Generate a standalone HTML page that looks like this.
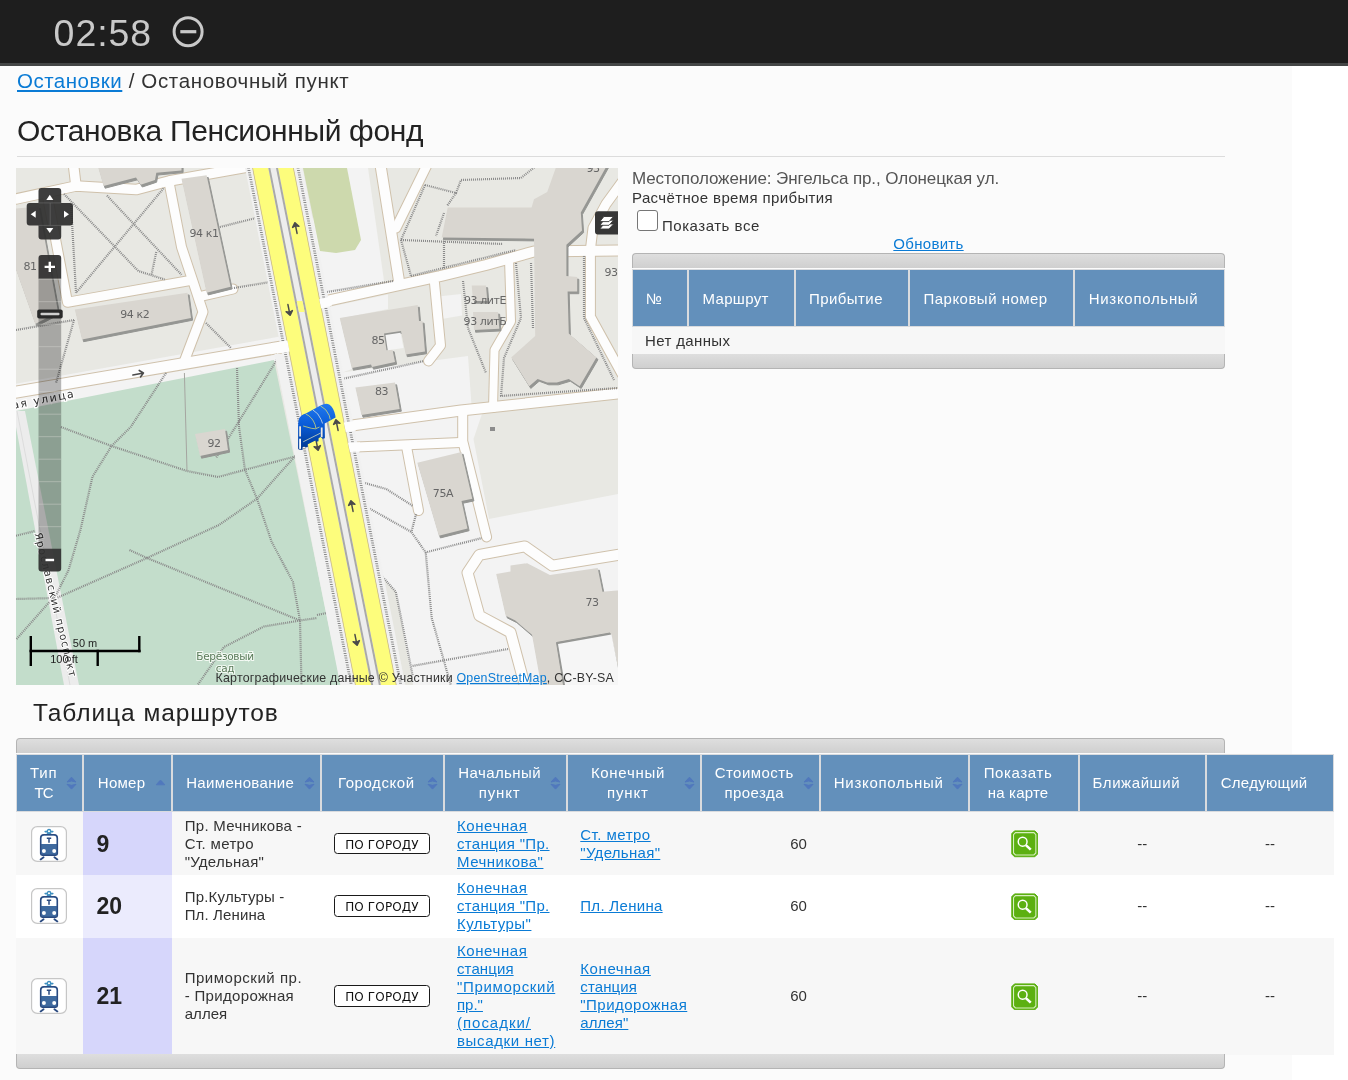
<!DOCTYPE html>
<html lang="ru">
<head>
<meta charset="utf-8">
<title>Остановка Пенсионный фонд</title>
<style>
html,body{margin:0;padding:0;}
body{width:1348px;height:1080px;overflow:hidden;background:#fff;font-family:"Liberation Sans",sans-serif;color:#333;position:relative;}
a{color:#0a7bd5;text-decoration:underline;}
span.m{white-space:nowrap;}
#crumb,#h1,#loc,#calc,#cbl,#upd,#h2,table,#clock,#map{will-change:transform;}
#topbar{position:absolute;left:0;top:0;width:1348px;height:62.6px;background:#1e1e1e;border-bottom:3.4px solid #444646;}
#clock{position:absolute;left:53px;padding-left:0.6px;top:11px;font-size:37.5px;line-height:44px;color:#c9c9c9;}
#dnd{position:absolute;left:171px;top:15px;width:34px;height:34px;}
#content{position:absolute;left:0;top:66px;width:1292px;height:1014px;background:#fbfbfb;}
#crumb{position:absolute;left:17px;top:68px;font-size:20.5px;line-height:26px;color:#333;white-space:nowrap;}
#h1{position:absolute;left:17px;top:113px;font-size:30px;line-height:36px;color:#222;white-space:nowrap;margin:0;font-weight:normal;}
#hr{position:absolute;left:17px;top:156px;width:1208px;height:1px;background:#dcdcdc;}
#map{position:absolute;left:16px;top:168px;width:602px;height:517px;overflow:hidden;background:#e9e8e3;}
#loc{position:absolute;left:632px;top:168px;font-size:17px;line-height:21px;color:#555;white-space:nowrap;}
#calc{position:absolute;left:632px;top:189px;font-size:15px;line-height:18px;color:#333;white-space:nowrap;}
#cb{position:absolute;left:637px;top:210px;width:19px;height:19px;border:1px solid #767676;border-radius:3px;background:#fff;}
#cbl{position:absolute;left:662px;top:217px;font-size:15px;line-height:18px;color:#333;white-space:nowrap;}
#upd{position:absolute;left:632px;width:593px;top:235px;text-align:center;font-size:15px;line-height:18px;}
.bar{position:absolute;height:14px;background:linear-gradient(#dedede,#cfcfcf);border:1px solid #b4b4b4;}
.bar.t{border-radius:4px 4px 0 0;border-bottom:none;}
.bar.b{border-radius:0 0 4px 4px;border-top:none;}
table{border-collapse:separate;border-spacing:0;table-layout:fixed;position:absolute;}
th{background:#6390bb;color:#fff;font-weight:normal;font-size:15px;line-height:19px;border:1px solid #d9dbde;padding:0 12px 2px 12px;box-sizing:border-box;position:relative;white-space:nowrap;}
td{font-size:15px;line-height:18px;color:#333;padding:0 13px;box-sizing:border-box;white-space:nowrap;}
#t1{left:632px;top:269px;width:593px;}
#t1 th{height:58px;text-align:center;padding-right:24px;padding-bottom:0;}
#t1 td{height:27px;background:#f7f7f7;}
#h2{position:absolute;left:33px;top:698px;font-size:24.5px;line-height:30px;color:#222;white-space:nowrap;margin:0;font-weight:normal;}
#t2{left:16px;top:754px;width:1318px;}
#t2 th{height:58px;text-align:center;padding-right:24px;}
#t2 td:first-child{padding-right:0;}
#t2 th.d{line-height:19.5px;padding-bottom:1px;}
#t2 tr.o td{background:#f7f7f7;}
#t2 tr.e td{background:#fff;}
#t2 tr.o td.n{background:#d6d6fb;}
#t2 tr.e td.n{background:#ebebfd;}
#t2 td.n{font-size:23px;font-weight:bold;color:#222;}
#t2 td.c{text-align:center;}
#t2 td.r{text-align:right;}
.sort{position:absolute;right:5px;top:50%;margin-top:-8px;width:11px;height:16px;}
.tram{display:block;width:36px;height:36px;margin:0 0 0 2.2px;}
.badge{display:block;width:94.6px;height:19.6px;border:1.2px solid #1a1a1a;border-radius:3.5px;background:#fff;font-family:"DejaVu Sans","Liberation Sans",sans-serif;font-size:12px;line-height:23.5px;text-align:center;color:#111;}
.zoom{display:block;width:27.4px;height:27.6px;margin:0 auto;position:relative;left:0.7px;top:0.4px;}
</style>
</head>
<body>
<div id="topbar">
  <div id="clock"><span class="m" style="letter-spacing:0.94px">02:58</span></div>
  <svg id="dnd" viewBox="0 0 34 34"><circle cx="17.1" cy="16.7" r="14" fill="none" stroke="#c9c9c9" stroke-width="3"/><rect x="9.3" y="15.1" width="16" height="3.2" fill="#c9c9c9"/></svg>
</div>
<div id="content"></div>
<div id="crumb"><a href="#"><span class="m" style="letter-spacing:0.50px">Остановки</span></a><span class="m" style="letter-spacing:0.65px"> / Остановочный пункт</span></div>
<h1 id="h1"><span class="m" style="letter-spacing:-0.35px">Остановка Пенсионный фонд</span></h1>
<div id="hr"></div>
<div id="map"><svg width="602" height="517" viewBox="0 0 602 517" style="position:absolute;left:0;top:0;font-family:'DejaVu Sans','Liberation Sans',sans-serif">
<rect width="602" height="517" fill="#e8e8e3"/>
<!-- light areas -->
<g fill="#f3f3f3">
<polygon points="330,0 352,0 368,113 330,124 300,131 290,60"/>
<polygon points="308,140 372,126.5 372,141 324,150.5 336,201 322,206"/>
<polygon points="-2,216 264,168.5 264,193 -2,245"/>
<polygon points="322,205 452,188 456,244 330,262"/>
<polygon points="325,258 602,222 602,517 380,517"/>
<polygon points="424.5,128.3 445,126 446,147.5 425.7,151"/>
</g>
<polygon points="457.5,271 473,351 602,326 602,222 468,240" fill="#e8e8e3"/>
<polygon points="364,407 380,424 397,517 381,517" fill="#e6e6e0"/>
<!-- park -->
<polygon points="0,243 258,192 325,517 0,517" fill="#c3ddcb"/>
<polygon points="287,0 331,0 345,72 339,82 320,85 304,83" fill="#cdd9ad"/>
<!-- Yaroslavsky street -->
<polygon points="-3,243 9,243 63,517 48,517" fill="#ececec"/>
<line x1="1" y1="243" x2="54" y2="517" stroke="#dcdcdc" stroke-width="1"/>
<!-- streets casing -->
<g fill="none" stroke="#cfc1ab" stroke-linecap="round" stroke-linejoin="round">
<path d="M0,31 L60,18 L120,21.6 L153,13 L237,-2" stroke-width="11.5"/>
<path d="M57.5,-3 L60,18" stroke-width="11.5"/>
<path d="M153.5,16.8 L165.5,79 L177.5,115 L187,144 L168,194" stroke-width="11.0"/>
<path d="M31,26 L51.5,134.3 L174,112.5" stroke-width="11.0"/>
<path d="M184.7,128.3 L217,121" stroke-width="11.0"/>
<path d="M-5,225 L275,177.3" stroke-width="13.0"/>
<path d="M364.5,-3 L383,113" stroke-width="12.0"/>
<path d="M380,60 L411,-3" stroke-width="11.0"/>
<path d="M290,137.7 L303,134.7 L424,108.2 L470,97 L518,83.5 L606,82.4" stroke-width="12.0"/>
<path d="M418.5,115 L424.5,177.5 L412.5,193" stroke-width="11.0"/>
<path d="M493,91 L495,153.5 L478.5,182 L477,240" stroke-width="10.0"/>
<path d="M574.4,81.5 L574.4,148.7 L606,206" stroke-width="11.0"/>
<path d="M574.4,81.5 L577,60 L590,36 L606,14" stroke-width="11.0"/>
<path d="M325,259 L445,242.5 L606,225" stroke-width="12.0"/>
<path d="M334.4,279.3 L444.3,274.5" stroke-width="11.0"/>
<path d="M446.7,243 L446.7,273 L470.6,369" stroke-width="11.0"/>
<path d="M390.6,279 L402.5,342.6" stroke-width="11.0"/>
<path d="M606,386.2 L536.3,397.6 L508.8,378.4 L463.4,386.8 L451.5,404.7 L463.4,447.7 L494.5,464.4 L509.5,520" stroke-width="12.0"/>
</g>
<g fill="none" stroke="#fdfdfd" stroke-linecap="round" stroke-linejoin="round">
<path d="M0,31 L60,18 L120,21.6 L153,13 L237,-2" stroke-width="9.5"/>
<path d="M57.5,-3 L60,18" stroke-width="9.5"/>
<path d="M153.5,16.8 L165.5,79 L177.5,115 L187,144 L168,194" stroke-width="9"/>
<path d="M31,26 L51.5,134.3 L174,112.5" stroke-width="9"/>
<path d="M184.7,128.3 L217,121" stroke-width="9"/>
<path d="M-5,225 L275,177.3" stroke-width="11"/>
<path d="M364.5,-3 L383,113" stroke-width="10"/>
<path d="M380,60 L411,-3" stroke-width="9"/>
<path d="M290,137.7 L303,134.7 L424,108.2 L470,97 L518,83.5 L606,82.4" stroke-width="10"/>
<path d="M418.5,115 L424.5,177.5 L412.5,193" stroke-width="9"/>
<path d="M493,91 L495,153.5 L478.5,182 L477,240" stroke-width="8"/>
<path d="M574.4,81.5 L574.4,148.7 L606,206" stroke-width="9"/>
<path d="M574.4,81.5 L577,60 L590,36 L606,14" stroke-width="9"/>
<path d="M325,259 L445,242.5 L606,225" stroke-width="10"/>
<path d="M334.4,279.3 L444.3,274.5" stroke-width="9"/>
<path d="M446.7,243 L446.7,273 L470.6,369" stroke-width="9"/>
<path d="M390.6,279 L402.5,342.6" stroke-width="9"/>
<path d="M606,386.2 L536.3,397.6 L508.8,378.4 L463.4,386.8 L451.5,404.7 L463.4,447.7 L494.5,464.4 L509.5,520" stroke-width="10"/>
</g>
<g fill="none" stroke="#8a8a8a" stroke-width="2.2" stroke-dasharray="1 1" stroke-linejoin="round">
<polyline points="45,259 95.5,278 171,303 202,309 282,287.7"/>
<polyline points="150,205 114.7,259 95.5,278 76.4,309 64.5,361.7 52.6,402 40.6,426 0,471.6"/>
<polyline points="221,200 223,259 229,302 241,330.7 255.6,373.7 277,414 284,452.5 285.5,517"/>
<polyline points="279.5,287.7 241,330.7 203,357 131,390 40.6,430 0,431"/>
<polyline points="113.5,382 131,390 284,452.5 301,450"/>
<polyline points="284,452.5 248,458.5 208,479 181.6,517"/>
<polyline points="0,367.7 19,363"/>
<polyline points="262,190 225,250 200,290"/>
<polyline points="48,26 122.3,103 148.7,111.5"/>
<polyline points="147.5,20.4 60,124.7"/>
<polyline points="91,27.6 165.5,106.7"/>
<polyline points="140.3,84 135.5,106.7"/>
<polyline points="55,36 60,124.7"/>
<polyline points="0,162 58,152"/>
<polyline points="58,152 40,215"/>
<polyline points="200,60 240,50"/>
<polyline points="218,120 254,114"/>
<polyline points="190,155 215,180"/>
<polyline points="409,17 440,25 431,38"/>
<polyline points="440,25 445,12 505,10 520,-2"/>
<polyline points="409,17 385,72 395,108"/>
<polyline points="385,72 487,76"/>
<polyline points="428,45 420,68"/>
<polyline points="428,73 428,100"/>
<polyline points="395,108 500,82"/>
<polyline points="447,113 452,160 470,205"/>
<polyline points="500,95 505,150 488,190 485,228 602,220"/>
<polyline points="515,95 517,160"/>
<polyline points="568,88 568,150 598,212"/>
<polyline points="326,211 408,193"/>
<polyline points="305,125 377,113"/>
<polyline points="336.8,285.3 345.2,314 370.3,321 396.6,337.8"/>
<polyline points="345.2,314 348.8,337.8 395.4,364 409.7,384.4 465.8,370"/>
<polyline points="400,346.2 395.4,364"/>
<polyline points="409.7,384.4 415.7,450 434.8,517"/>
<polyline points="348.8,337.8 363,404.7 379.8,423.8 396.6,507.4"/>
<polyline points="396.6,497.9 492,481"/>
<polyline points="301,447 320,443"/>
</g>
<line x1="168.4" y1="205" x2="171" y2="303" stroke="#a5a5a0" stroke-width="1"/>

<polygon points="-0.4,43.0 24.4,40.6 43.6,146.2 20.8,158.2 -0.4,98.2" fill="#959693" stroke="#959693" stroke-width="1" stroke-linejoin="round"/><polygon points="-2.0,40.8 22.8,38.4 42.0,144.0 19.2,156.0 -2.0,96.0" fill="#d9d6d0"/>
<polygon points="83.1,-0.8 167.1,-0.8 167.1,4.6 141.9,7.0 140.6,14.2 126.3,19.0 121.6,11.8 89.1,20.2" fill="#959693" stroke="#959693" stroke-width="1" stroke-linejoin="round"/><polygon points="81.5,-3.0 165.5,-3.0 165.5,2.4 140.3,4.8 139.0,12.0 124.7,16.8 120.0,9.6 87.5,18.0" fill="#d9d6d0"/>
<polygon points="167.1,13.0 192.2,9.4 216.2,120.9 192.2,126.9" fill="#959693" stroke="#959693" stroke-width="1" stroke-linejoin="round"/><polygon points="165.5,10.8 190.6,7.2 214.6,118.7 190.6,124.7" fill="#d9d6d0"/>
<polygon points="60.4,143.7 173.1,126.9 176.6,152.2 67.6,173.7" fill="#959693" stroke="#959693" stroke-width="1" stroke-linejoin="round"/><polygon points="58.8,141.5 171.5,124.7 175.0,150.0 66.0,171.5" fill="#d9d6d0"/>
<polygon points="180.6,268.2 210.6,263.2 213.6,284.2 185.6,290.2" fill="#959693" stroke="#959693" stroke-width="1" stroke-linejoin="round"/><polygon points="179.0,266.0 209.0,261.0 212.0,282.0 184.0,288.0" fill="#d9d6d0"/>
<polygon points="325.4,152.2 403.3,139.2 404.6,155.2 408.1,155.2 410.6,185.7 391.3,188.7 386.6,165.2 369.6,167.7 372.1,184.5 378.1,183.7 380.6,196.2 357.6,201.2 356.6,198.8 337.4,202.2" fill="#959693" stroke="#959693" stroke-width="1" stroke-linejoin="round"/><polygon points="323.8,150.0 401.7,137.0 403.0,153.0 406.5,153.0 409.0,183.5 389.7,186.5 385.0,163.0 368.0,165.5 370.5,182.3 376.5,181.5 379.0,194.0 356.0,199.0 355.0,196.6 335.8,200.0" fill="#d9d6d0"/>
<polygon points="341.0,221.6 380.6,216.8 385.3,243.2 347.0,249.2" fill="#959693" stroke="#959693" stroke-width="1" stroke-linejoin="round"/><polygon points="339.4,219.4 379.0,214.6 383.7,241.0 345.4,247.0" fill="#d9d6d0"/>
<polygon points="457.3,119.7 471.6,119.7 472.9,135.2 458.6,135.2" fill="#959693" stroke="#959693" stroke-width="1" stroke-linejoin="round"/><polygon points="455.7,117.5 470.0,117.5 471.3,133.0 457.0,133.0" fill="#d9d6d0"/>
<polygon points="458.6,146.2 483.6,146.2 484.9,162.9 459.6,164.2" fill="#959693" stroke="#959693" stroke-width="1" stroke-linejoin="round"/><polygon points="457.0,144.0 482.0,144.0 483.3,160.7 458.0,162.0" fill="#d9d6d0"/>
<polygon points="592.8,-0.8 566.4,46.6 567.6,64.6 552.0,78.9 552.0,110.1 562.8,111.3 562.8,125.7 553.2,125.7 554.4,167.7 582.0,191.6 565.2,220.4 554.4,213.2 542.4,216.8 532.8,216.8 523.2,213.2 514.8,220.4 496.8,191.6 520.8,170.1 519.6,72.9 427.3,71.7 433.3,41.8 517.2,41.8 519.6,33.4 532.8,26.2 542.4,-0.8" fill="#959693" stroke="#959693" stroke-width="1" stroke-linejoin="round"/><polygon points="591.2,-3.0 564.8,44.4 566.0,62.4 550.4,76.7 550.4,107.9 561.2,109.1 561.2,123.5 551.6,123.5 552.8,165.5 580.4,189.4 563.6,218.2 552.8,211.0 540.8,214.6 531.2,214.6 521.6,211.0 513.2,218.2 495.2,189.4 519.2,167.9 518.0,70.7 425.7,69.5 431.7,39.6 515.6,39.6 518.0,31.2 531.2,24.0 540.8,-3.0" fill="#d9d6d0"/>
<polygon points="402.9,297.0 447.1,286.2 457.9,332.9 447.1,335.2 453.1,362.7 424.4,369.9" fill="#959693" stroke="#959693" stroke-width="1" stroke-linejoin="round"/><polygon points="401.3,294.8 445.5,284.0 456.3,330.7 445.5,333.0 451.5,360.5 422.8,367.7" fill="#d9d6d0"/>
<polygon points="481.8,408.1 496.1,405.7 496.1,399.8 512.8,397.4 535.5,409.3 583.3,402.2 588.1,426.0 602.4,424.8 607.6,424.2 607.6,522.2 527.2,522.2 517.6,469.0 500.9,454.7 491.3,449.9" fill="#959693" stroke="#959693" stroke-width="1" stroke-linejoin="round"/><polygon points="480.2,405.9 494.5,403.5 494.5,397.6 511.2,395.2 533.9,407.1 581.7,400.0 586.5,423.8 600.8,422.6 606.0,422.0 606.0,520.0 525.6,520.0 516.0,466.8 499.3,452.5 489.7,447.7" fill="#d9d6d0"/>
<polygon points="540.5,474.5 594,465 606,520 548,520" fill="#959693" stroke="#959693" stroke-width="1" stroke-linejoin="round"/><polygon points="542,476 595.5,466.5 606,520 549.5,520" fill="#f6f6f6"/>
<rect x="474" y="259" width="5" height="4" fill="#8c8c8c"/>

<polygon points="369.5,167 384.5,164.8 387.5,180 371.8,182.3" fill="#f4f4f4"/>
<!-- avenue -->
<g transform="skewX(11.25)">
<rect x="229" y="-5" width="7.5" height="200" fill="#f1f1f1"/>
<rect x="221.5" y="186" width="15" height="340" fill="#f1f1f1"/>
<rect x="277" y="-5" width="9.5" height="530" fill="#f1f1f1"/>
<rect x="236.5" y="-5" width="41" height="530" fill="#fdfd7c"/>
<rect x="252.3" y="-5" width="9.7" height="530" fill="#ededed"/>
<rect x="252.3" y="-5" width="2" height="530" fill="#a9a9a9"/>
<rect x="260" y="-5" width="2" height="530" fill="#a9a9a9"/>
<rect x="254.3" y="133" width="5.7" height="11" fill="#fdfd7c"/>
<rect x="236.2" y="-5" width="0.8" height="530" fill="#c8b98c"/>
<rect x="277" y="-5" width="0.8" height="530" fill="#c8b98c"/>
<g stroke="#8a8a8a" stroke-width="2.8" stroke-dasharray="1 1.3" fill="none">
<line x1="232.5" y1="-5" x2="232.5" y2="525"/>
<line x1="282" y1="-5" x2="282" y2="525"/>
</g>
</g>
<g fill="#fdfdfd">
<polygon points="303.2,131.2 316,128.3 316,137.5 305.2,140.6"/>
<polygon points="327.8,254.4 340,252.7 340,262.4 329.8,264.1"/>
<polygon points="332.0,274.8 344,274.3 344,283.4 334,283.9"/>
<polygon points="261,174.4 271.4,172.6 273.6,183.4 261,185.8"/>
</g>
<path transform="translate(280,60) rotate(-11.25)" d="M0,5.5 L0,-3 M-3.2,-1.2 L0,-5.4 L3.2,-1.2 L0,-2.4 Z" fill="#4a4a4a" stroke="#4a4a4a" stroke-width="1.5" stroke-linecap="round" stroke-linejoin="round"/>
<path transform="translate(273,142) rotate(168.75)" d="M0,5.5 L0,-3 M-3.2,-1.2 L0,-5.4 L3.2,-1.2 L0,-2.4 Z" fill="#4a4a4a" stroke="#4a4a4a" stroke-width="1.5" stroke-linecap="round" stroke-linejoin="round"/>
<path transform="translate(321,257) rotate(-11.25)" d="M0,5.5 L0,-3 M-3.2,-1.2 L0,-5.4 L3.2,-1.2 L0,-2.4 Z" fill="#4a4a4a" stroke="#4a4a4a" stroke-width="1.5" stroke-linecap="round" stroke-linejoin="round"/>
<path transform="translate(301,277) rotate(168.75)" d="M0,5.5 L0,-3 M-3.2,-1.2 L0,-5.4 L3.2,-1.2 L0,-2.4 Z" fill="#4a4a4a" stroke="#4a4a4a" stroke-width="1.5" stroke-linecap="round" stroke-linejoin="round"/>
<path transform="translate(336,338) rotate(-11.25)" d="M0,5.5 L0,-3 M-3.2,-1.2 L0,-5.4 L3.2,-1.2 L0,-2.4 Z" fill="#4a4a4a" stroke="#4a4a4a" stroke-width="1.5" stroke-linecap="round" stroke-linejoin="round"/>
<path transform="translate(340,472) rotate(168.75)" d="M0,5.5 L0,-3 M-3.2,-1.2 L0,-5.4 L3.2,-1.2 L0,-2.4 Z" fill="#4a4a4a" stroke="#4a4a4a" stroke-width="1.5" stroke-linecap="round" stroke-linejoin="round"/>
<path transform="translate(122.3,206) rotate(79)" d="M0,5.5 L0,-4 M-3.3,-1.6 L0,-5.2 L3.3,-1.6" fill="none" stroke="#4a4a4a" stroke-width="1.6" stroke-linecap="round" stroke-linejoin="round"/>

<g font-size="11" fill="#666" text-anchor="middle" letter-spacing="-0.4">
<text x="188" y="69">94 к1</text>
<text x="118.7" y="149.5">94 к2</text>
<text x="14" y="102">81</text>
<text x="198" y="279">92</text>
<text x="362" y="175.5">85</text>
<text x="365.5" y="227">83</text>
<text x="469" y="136">93 литЕ</text>
<text x="469" y="157">93 литБ</text>
<text x="595" y="107.5">93</text>
<text x="577" y="4.4">93</text>
<text x="427" y="329">75А</text>
<text x="576" y="437.5">73</text>
</g>
<g font-size="11" fill="#333" stroke="#fff" stroke-width="2.5" paint-order="stroke" letter-spacing="1.5">
<text transform="translate(-3,241) rotate(-10.8)">ая улица</text>
<text transform="translate(18.5,365.5) rotate(76.3)" letter-spacing="1.15" font-size="10.5" stroke-width="2">Ярославский проспект</text>
</g>
<g font-size="10.5" fill="#587a58" stroke="#f4faf4" stroke-width="2" paint-order="stroke" text-anchor="middle" letter-spacing="-0.3"><text x="209" y="492">Берёзовый</text><text x="209" y="504">сад</text></g>

<defs><linearGradient id="bg" x1="0" y1="0" x2="0" y2="1"><stop offset="0" stop-color="#2079ee"/><stop offset="0.45" stop-color="#0a5cd8"/><stop offset="1" stop-color="#00388f"/></linearGradient></defs>
<g transform="translate(274,230)">
<path d="M8.1,27.5 L8.4,22.9 Q9,19.5 11.5,17.6 Q13.5,16.2 15.8,15.6 L30.5,7.6 Q33,6 35.1,5.9 Q37.5,5.6 39.6,6.8 Q41.6,8.2 43,10.8 Q44.6,14 45.2,17 L45.6,19.6 L34.7,25.5 L34.9,40.2 L32.6,40.7 L30.6,38.9 L28.6,40.2 L28.5,43.3 L26.5,43.8 L25.5,42.6 L17.8,46.3 L17.8,48.9 L15.3,49.6 L14.3,48.4 L12.7,48.9 L12.5,51.9 L8.7,51.4 L8.1,50.4 Z" fill="url(#bg)"/>
<rect x="9.2" y="28.3" width="1.8" height="10.2" fill="#ece7e0"/>
<rect x="9.2" y="40.7" width="1.8" height="10.2" fill="#fff"/>
<rect x="30.8" y="29.5" width="1.8" height="9.7" fill="#ece7e0"/>
<g fill="none" stroke-width="0.7">
<path d="M15.8,16 Q22.4,19 25,26.5 L26,30.5" stroke="#ece96a"/>
<path d="M22.9,12 Q28.5,15 31,21.4 L32.6,25.5" stroke="#f0f0e0"/>
<path d="M30.5,7.9 Q36.7,11 39.2,17.3 L40.2,21.4" stroke="#ece96a"/>
<path d="M13.2,28 L21.4,30.3 L25.5,30.8 L29.5,29" stroke="#ece96a"/>
<path d="M13.2,43.8 L30.5,35.1" stroke="#f0f0c0"/>
</g>
</g>

<g>
<path d="M25.5,20.1 h16.7 a3,3 0 0 1 3,3 v11.8 h8.8 a3,3 0 0 1 3,3 v16.5 a3,3 0 0 1 -3,3 h-8.8 v11.1 a3,3 0 0 1 -3,3 h-16.7 a3,3 0 0 1 -3,-3 v-11.1 h-8.8 a3,3 0 0 1 -3,-3 v-16.5 a3,3 0 0 1 3,-3 h8.8 v-11.8 a3,3 0 0 1 3,-3 z" fill="#2e2e2e" fill-opacity="0.93"/>
<path d="M22.5,34.9 h22.7 M22.5,57.4 h22.7 M34.2,34.9 v22.5" stroke="#777" stroke-width="0.5" fill="none"/>
<g fill="#fff"><polygon points="33.8,26.8 37.3,32 30.3,32"/><polygon points="33.8,65 37.3,60 30.3,60"/><polygon points="14.7,46.2 19.7,42.7 19.7,49.7"/><polygon points="53,46.2 48,42.7 48,49.7"/></g>
<path d="M22.5,110.7 v-20.7 a3,3 0 0 1 3,-3 h16.7 a3,3 0 0 1 3,3 v20.7 z" fill="#2e2e2e" fill-opacity="0.93"/>
<path d="M28.6,98.9 h10.4 M33.8,93.7 v10.4" stroke="#fff" stroke-width="2.4" fill="none"/>
<rect x="22.5" y="110.7" width="22.7" height="270.3" fill="#000" fill-opacity="0.28"/>
<g stroke="#d8d8d4" stroke-opacity="0.55" stroke-width="0.8">
<line x1="22.5" x2="45.2" y1="111.2" y2="111.2"/><line x1="22.5" x2="45.2" y1="133.7" y2="133.7"/><line x1="22.5" x2="45.2" y1="156.2" y2="156.2"/><line x1="22.5" x2="45.2" y1="178.7" y2="178.7"/><line x1="22.5" x2="45.2" y1="201.2" y2="201.2"/><line x1="22.5" x2="45.2" y1="223.7" y2="223.7"/><line x1="22.5" x2="45.2" y1="246.2" y2="246.2"/><line x1="22.5" x2="45.2" y1="268.7" y2="268.7"/><line x1="22.5" x2="45.2" y1="291.2" y2="291.2"/><line x1="22.5" x2="45.2" y1="313.7" y2="313.7"/><line x1="22.5" x2="45.2" y1="336.2" y2="336.2"/><line x1="22.5" x2="45.2" y1="358.7" y2="358.7"/></g>
<rect x="21.2" y="141.6" width="25.5" height="8.8" rx="2" fill="#2a2a2a"/>
<rect x="24.5" y="144.8" width="19" height="2.4" rx="1" fill="#cfcfcf"/>
<path d="M22.5,380.8 h22.7 v19.7 a3,3 0 0 1 -3,3 h-16.7 a3,3 0 0 1 -3,-3 z" fill="#2e2e2e" fill-opacity="0.93"/>
<path d="M29.5,392 h8.6" stroke="#fff" stroke-width="2.4" fill="none"/>
<path d="M602,43.2 h-20 a3,3 0 0 0 -3,3 v17.4 a3,3 0 0 0 3,3 h20 z" fill="#363636"/>
<g fill="#fff" stroke="#363636" stroke-width="0.9"><polygon points="583.8,61 587.9,55.9 597.6,55.9 593,61"/><polygon points="583.8,57.3 587.9,52.2 597.6,52.2 593,57.3"/><polygon points="583.8,53.6 587.9,48.5 597.6,48.5 593,53.6"/></g>
</g>
<g stroke="#000" stroke-width="2.6" fill="none"><path d="M13.5,483 H124.6"/><path d="M14.8,468 V498 M123.3,468 V484.3 M81.7,481.7 V498" stroke-width="2.4"/></g>
<g font-size="11" fill="#222" text-anchor="middle" font-family="'Liberation Sans',sans-serif"><text x="69" y="479">50 m</text><text x="48" y="495">100 ft</text></g>
<text x="598" y="514" font-size="12.4" letter-spacing="0.22" text-anchor="end" fill="#333" font-family="'Liberation Sans',sans-serif" style="white-space:pre">Картографические данные © Участники <tspan fill="#0a7bd5" text-decoration="underline">OpenStreetMap</tspan>, CC-BY-SA</text>

</svg>
</div>
<div id="loc"><span class="m" style="letter-spacing:-0.10px">Местоположение: Энгельса пр., Олонецкая ул.</span></div>
<div id="calc"><span class="m" style="letter-spacing:0.37px">Расчётное время прибытия</span></div>
<div id="cb"></div>
<div id="cbl"><span class="m" style="letter-spacing:0.52px">Показать все</span></div>
<div id="upd"><a href="#"><span class="m" style="letter-spacing:0.30px">Обновить</span></a></div>
<div class="bar t" style="left:632px;top:253px;width:591px;"></div>
<table id="t1">
 <colgroup><col style="width:56.3px"><col style="width:106.7px"><col style="width:114px"><col style="width:165.2px"><col style="width:150.8px"></colgroup>
 <tr><th>№</th><th><span class="m" style="letter-spacing:0.31px">Маршрут</span></th><th><span class="m" style="letter-spacing:0.42px">Прибытие</span></th><th><span class="m" style="letter-spacing:0.48px">Парковый номер</span></th><th><span class="m" style="letter-spacing:0.70px">Низкопольный</span></th></tr>
 <tr><td colspan="5"><span class="m" style="letter-spacing:0.37px">Нет данных</span></td></tr>
</table>
<div class="bar b" style="left:632px;top:354px;width:591px;"></div>
<h2 id="h2"><span class="m" style="letter-spacing:0.94px">Таблица маршрутов</span></h2>
<div class="bar t" style="left:16px;top:738px;width:1207px;"></div>
<table id="t2">
 <colgroup><col style="width:67.4px"><col style="width:88.3px"><col style="width:149px"><col style="width:123.3px"><col style="width:123.3px"><col style="width:133.3px"><col style="width:119.4px"><col style="width:149.5px"><col style="width:109.1px"><col style="width:127.6px"><col style="width:127.8px"></colgroup>
 <tr>
  <th class="d"><span class="m" style="letter-spacing:0.84px">Тип</span><br><span class="m" style="letter-spacing:-0.80px">ТС</span><svg class="sort" viewBox="0 0 11 16"><path d="M1,7 L5.5,2.2 L10,7 L5.5,6 Z M1,9.3 L5.5,10.3 L10,9.3 L5.5,14.1 Z" fill="#5078bd" stroke="#5078bd" stroke-width="1" stroke-linejoin="round"/></svg></th><th><span class="m" style="letter-spacing:0.26px">Номер</span><svg class="sort" viewBox="0 0 11 16"><path d="M1.2,9.8 L4.6,5.8 Q5.5,5.2 6.4,5.8 L9.8,9.8 Z" fill="#5078bd" stroke="#5078bd" stroke-width="0.8" stroke-linejoin="round"/></svg></th><th><span class="m" style="letter-spacing:0.34px">Наименование</span><svg class="sort" viewBox="0 0 11 16"><path d="M1,7 L5.5,2.2 L10,7 L5.5,6 Z M1,9.3 L5.5,10.3 L10,9.3 L5.5,14.1 Z" fill="#5078bd" stroke="#5078bd" stroke-width="1" stroke-linejoin="round"/></svg></th><th><span class="m" style="letter-spacing:0.58px">Городской</span><svg class="sort" viewBox="0 0 11 16"><path d="M1,7 L5.5,2.2 L10,7 L5.5,6 Z M1,9.3 L5.5,10.3 L10,9.3 L5.5,14.1 Z" fill="#5078bd" stroke="#5078bd" stroke-width="1" stroke-linejoin="round"/></svg></th><th class="d"><span class="m" style="letter-spacing:0.42px">Начальный</span><br><span class="m" style="letter-spacing:0.87px">пункт</span><svg class="sort" viewBox="0 0 11 16"><path d="M1,7 L5.5,2.2 L10,7 L5.5,6 Z M1,9.3 L5.5,10.3 L10,9.3 L5.5,14.1 Z" fill="#5078bd" stroke="#5078bd" stroke-width="1" stroke-linejoin="round"/></svg></th><th class="d"><span class="m" style="letter-spacing:0.70px">Конечный</span><br><span class="m" style="letter-spacing:0.87px">пункт</span><svg class="sort" viewBox="0 0 11 16"><path d="M1,7 L5.5,2.2 L10,7 L5.5,6 Z M1,9.3 L5.5,10.3 L10,9.3 L5.5,14.1 Z" fill="#5078bd" stroke="#5078bd" stroke-width="1" stroke-linejoin="round"/></svg></th><th class="d"><span class="m" style="letter-spacing:0.46px">Стоимость</span><br><span class="m" style="letter-spacing:0.46px">проезда</span><svg class="sort" viewBox="0 0 11 16"><path d="M1,7 L5.5,2.2 L10,7 L5.5,6 Z M1,9.3 L5.5,10.3 L10,9.3 L5.5,14.1 Z" fill="#5078bd" stroke="#5078bd" stroke-width="1" stroke-linejoin="round"/></svg></th><th><span class="m" style="letter-spacing:0.71px">Низкопольный</span><svg class="sort" viewBox="0 0 11 16"><path d="M1,7 L5.5,2.2 L10,7 L5.5,6 Z M1,9.3 L5.5,10.3 L10,9.3 L5.5,14.1 Z" fill="#5078bd" stroke="#5078bd" stroke-width="1" stroke-linejoin="round"/></svg></th><th class="d"><span class="m" style="letter-spacing:0.62px">Показать</span><br><span class="m" style="letter-spacing:0.20px">на карте</span></th><th><span class="m" style="letter-spacing:0.58px">Ближайший</span></th><th><span class="m" style="letter-spacing:0.29px">Следующий</span></th>
 </tr>
 <tr class="o" style="height:63px"><td><svg class="tram" viewBox="0 0 36 36"><rect x="0.6" y="0.6" width="34.8" height="34.8" rx="5.6" fill="#fff" stroke="#c6c6c6" stroke-width="1.2"/><path d="M14.2,5.6 H21.8" stroke="#3f8fbf" stroke-width="1.6" stroke-linecap="round" fill="none"/><circle cx="18" cy="5.2" r="1.7" fill="#fff" stroke="#3f8fbf" stroke-width="1.3"/><path d="M16,7 L15.3,8.6 H20.7 L20,7" fill="#3f8fbf"/><path d="M9.6,12 Q9.6,8.6 13,8.6 H23 Q26.4,8.6 26.4,12 V27.5 Q26.4,29.2 24.8,29.2 H11.2 Q9.6,29.2 9.6,27.5 Z" fill="#3f6a9f" stroke="#2a4a80" stroke-width="1.4"/><path d="M10.6,12 Q10.6,9.7 13,9.7 H23 Q25.4,9.7 25.4,12 V18 H10.6 Z" fill="#fff"/><path d="M15.8,12.2 H20.2 M18,12.4 V16.8" stroke="#2a4a80" stroke-width="1.5" fill="none"/><circle cx="12.9" cy="25" r="2" fill="#fff"/><circle cx="23.2" cy="25" r="2" fill="#fff"/><path d="M12.6,31.2 L9.6,33.4 M23.4,31.2 L26.4,33.4" stroke="#2a4a80" stroke-width="1.8" stroke-linecap="round" fill="none"/></svg></td><td class="n">9</td><td><span class="m" style="letter-spacing:0.30px">Пр. Мечникова -</span><br><span class="m" style="letter-spacing:0.36px">Ст. метро</span><br><span class="m" style="letter-spacing:0.25px">"Удельная"</span></td><td><span class="badge"><span class="m" style="letter-spacing:0.13px">ПО ГОРОДУ</span></span></td><td><a href="#"><span class="m" style="letter-spacing:0.59px">Конечная</span><br><span class="m" style="letter-spacing:0.32px">станция "Пр.</span><br><span class="m" style="letter-spacing:0.49px">Мечникова"</span></a></td><td><a href="#"><span class="m" style="letter-spacing:0.48px">Ст. метро</span><br><span class="m" style="letter-spacing:0.31px">"Удельная"</span></a></td><td class="r">60</td><td></td><td><svg class="zoom" viewBox="0 0 28 28"><path d="M3.6,0.8 H24.4 L27.2,3.6 V24.4 L24.4,27.2 H3.6 L0.8,24.4 V3.6 Z" fill="#5cb011" stroke="#5cb011" stroke-width="1"/><path d="M4.6,2.6 H23.4 L25.4,4.6 V23.4 L23.4,25.4 H4.6 L2.6,23.4 V4.6 Z" fill="none" stroke="#d8efc0" stroke-width="1.1"/><circle cx="11.9" cy="11.9" r="4.5" fill="none" stroke="#fff" stroke-width="1.5"/><path d="M15.2,15.3 L20.2,20" stroke="#fff" stroke-width="2.6" fill="none"/></svg></td><td class="c">--</td><td class="c">--</td></tr>
 <tr class="e" style="height:62.5px"><td><svg class="tram" viewBox="0 0 36 36"><rect x="0.6" y="0.6" width="34.8" height="34.8" rx="5.6" fill="#fff" stroke="#c6c6c6" stroke-width="1.2"/><path d="M14.2,5.6 H21.8" stroke="#3f8fbf" stroke-width="1.6" stroke-linecap="round" fill="none"/><circle cx="18" cy="5.2" r="1.7" fill="#fff" stroke="#3f8fbf" stroke-width="1.3"/><path d="M16,7 L15.3,8.6 H20.7 L20,7" fill="#3f8fbf"/><path d="M9.6,12 Q9.6,8.6 13,8.6 H23 Q26.4,8.6 26.4,12 V27.5 Q26.4,29.2 24.8,29.2 H11.2 Q9.6,29.2 9.6,27.5 Z" fill="#3f6a9f" stroke="#2a4a80" stroke-width="1.4"/><path d="M10.6,12 Q10.6,9.7 13,9.7 H23 Q25.4,9.7 25.4,12 V18 H10.6 Z" fill="#fff"/><path d="M15.8,12.2 H20.2 M18,12.4 V16.8" stroke="#2a4a80" stroke-width="1.5" fill="none"/><circle cx="12.9" cy="25" r="2" fill="#fff"/><circle cx="23.2" cy="25" r="2" fill="#fff"/><path d="M12.6,31.2 L9.6,33.4 M23.4,31.2 L26.4,33.4" stroke="#2a4a80" stroke-width="1.8" stroke-linecap="round" fill="none"/></svg></td><td class="n">20</td><td><span class="m" style="letter-spacing:0.20px">Пр.Культуры -</span><br><span class="m" style="letter-spacing:0.13px">Пл. Ленина</span></td><td><span class="badge"><span class="m" style="letter-spacing:0.13px">ПО ГОРОДУ</span></span></td><td><a href="#"><span class="m" style="letter-spacing:0.59px">Конечная</span><br><span class="m" style="letter-spacing:0.32px">станция "Пр.</span><br><span class="m" style="letter-spacing:0.48px">Культуры"</span></a></td><td><a href="#"><span class="m" style="letter-spacing:0.30px">Пл. Ленина</span></a></td><td class="r">60</td><td></td><td><svg class="zoom" viewBox="0 0 28 28"><path d="M3.6,0.8 H24.4 L27.2,3.6 V24.4 L24.4,27.2 H3.6 L0.8,24.4 V3.6 Z" fill="#5cb011" stroke="#5cb011" stroke-width="1"/><path d="M4.6,2.6 H23.4 L25.4,4.6 V23.4 L23.4,25.4 H4.6 L2.6,23.4 V4.6 Z" fill="none" stroke="#d8efc0" stroke-width="1.1"/><circle cx="11.9" cy="11.9" r="4.5" fill="none" stroke="#fff" stroke-width="1.5"/><path d="M15.2,15.3 L20.2,20" stroke="#fff" stroke-width="2.6" fill="none"/></svg></td><td class="c">--</td><td class="c">--</td></tr>
 <tr class="o" style="height:117px"><td><svg class="tram" viewBox="0 0 36 36"><rect x="0.6" y="0.6" width="34.8" height="34.8" rx="5.6" fill="#fff" stroke="#c6c6c6" stroke-width="1.2"/><path d="M14.2,5.6 H21.8" stroke="#3f8fbf" stroke-width="1.6" stroke-linecap="round" fill="none"/><circle cx="18" cy="5.2" r="1.7" fill="#fff" stroke="#3f8fbf" stroke-width="1.3"/><path d="M16,7 L15.3,8.6 H20.7 L20,7" fill="#3f8fbf"/><path d="M9.6,12 Q9.6,8.6 13,8.6 H23 Q26.4,8.6 26.4,12 V27.5 Q26.4,29.2 24.8,29.2 H11.2 Q9.6,29.2 9.6,27.5 Z" fill="#3f6a9f" stroke="#2a4a80" stroke-width="1.4"/><path d="M10.6,12 Q10.6,9.7 13,9.7 H23 Q25.4,9.7 25.4,12 V18 H10.6 Z" fill="#fff"/><path d="M15.8,12.2 H20.2 M18,12.4 V16.8" stroke="#2a4a80" stroke-width="1.5" fill="none"/><circle cx="12.9" cy="25" r="2" fill="#fff"/><circle cx="23.2" cy="25" r="2" fill="#fff"/><path d="M12.6,31.2 L9.6,33.4 M23.4,31.2 L26.4,33.4" stroke="#2a4a80" stroke-width="1.8" stroke-linecap="round" fill="none"/></svg></td><td class="n">21</td><td><span class="m" style="letter-spacing:0.52px">Приморский пр.</span><br><span class="m" style="letter-spacing:0.33px">- Придорожная</span><br><span class="m" style="letter-spacing:0.05px">аллея</span></td><td><span class="badge"><span class="m" style="letter-spacing:0.13px">ПО ГОРОДУ</span></span></td><td><a href="#"><span class="m" style="letter-spacing:0.59px">Конечная</span><br><span class="m" style="letter-spacing:0.10px">станция</span><br><span class="m" style="letter-spacing:0.69px">"Приморский</span><br>пр."<br><span class="m" style="letter-spacing:0.98px">(посадки/</span><br><span class="m" style="letter-spacing:0.65px">высадки нет)</span></a></td><td><a href="#"><span class="m" style="letter-spacing:0.59px">Конечная</span><br><span class="m" style="letter-spacing:0.10px">станция</span><br><span class="m" style="letter-spacing:0.48px">"Придорожная</span><br><span class="m" style="letter-spacing:0.07px">аллея"</span></a></td><td class="r">60</td><td></td><td><svg class="zoom" viewBox="0 0 28 28"><path d="M3.6,0.8 H24.4 L27.2,3.6 V24.4 L24.4,27.2 H3.6 L0.8,24.4 V3.6 Z" fill="#5cb011" stroke="#5cb011" stroke-width="1"/><path d="M4.6,2.6 H23.4 L25.4,4.6 V23.4 L23.4,25.4 H4.6 L2.6,23.4 V4.6 Z" fill="none" stroke="#d8efc0" stroke-width="1.1"/><circle cx="11.9" cy="11.9" r="4.5" fill="none" stroke="#fff" stroke-width="1.5"/><path d="M15.2,15.3 L20.2,20" stroke="#fff" stroke-width="2.6" fill="none"/></svg></td><td class="c">--</td><td class="c">--</td></tr>
</table>
<div class="bar b" style="left:16px;top:1054px;width:1207px;"></div>
</body>
</html>
